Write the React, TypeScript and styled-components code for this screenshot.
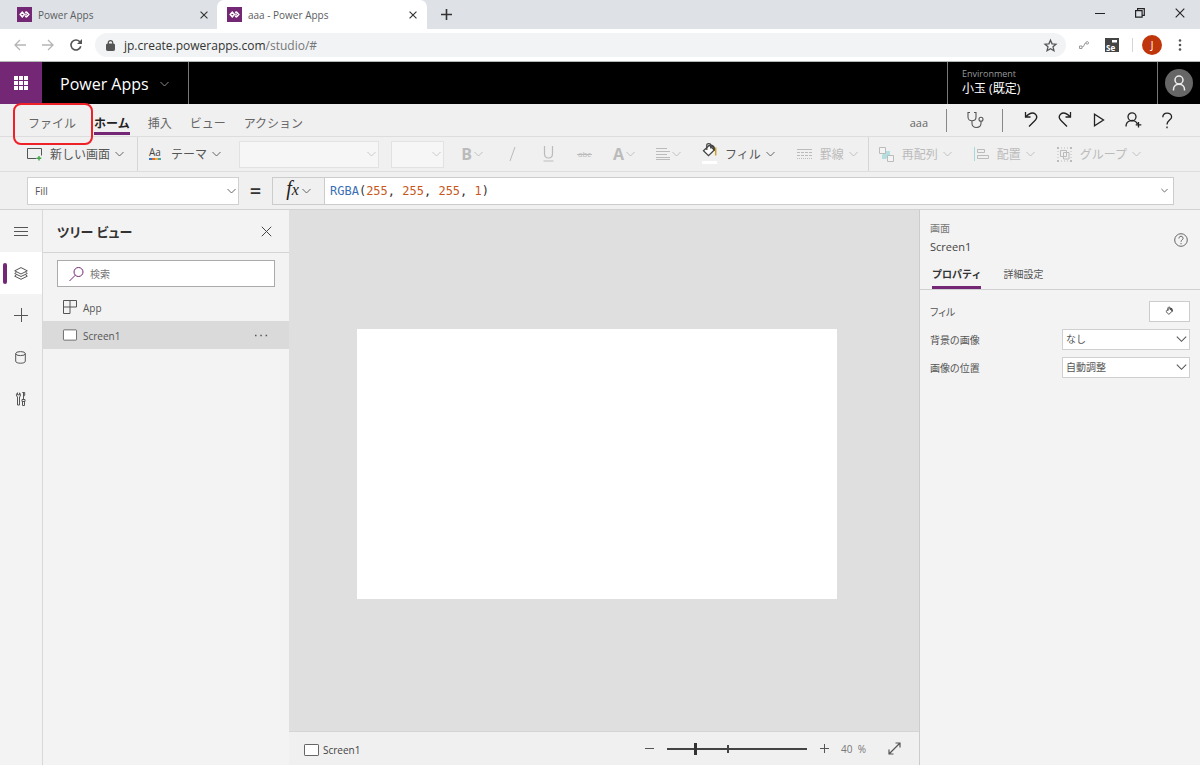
import React from "react";
import styled, { createGlobalStyle, css } from "styled-components";

const sans = `"Open Sans", "Noto Sans CJK JP", sans-serif`;
const purple = "#742774";

const GlobalStyle = createGlobalStyle`
  * { box-sizing: border-box; }
  body { margin: 0; font-family: ${sans}; font-size: 10px; color: #444; background: #f3f3f3; }
  button, input, select { font: inherit; color: inherit; margin: 0; }
  button { border: 0; padding: 0; background: none; cursor: pointer; white-space: nowrap; }
  svg { display: block; flex: none; overflow: visible; }
`;

/* ---------- icons ---------- */

const Svg = styled.svg<{ $w?: number }>`
  fill: none;
  stroke: currentColor;
  stroke-width: ${(p) => p.$w ?? 1};
`;

type IconProps = { w?: number; h?: number; box?: string; sw?: number; children: React.ReactNode };
const Icon = ({ w = 16, h = w, box = `0 0 ${w} ${h}`, sw, children }: IconProps) => (
  <Svg width={w} height={h} viewBox={box} $w={sw} aria-hidden="true">
    {children}
  </Svg>
);

const Chevron = ({ w = 9 }: { w?: number }) => (
  <Icon w={w} h={w === 9 ? 6 : 7} box="0 0 9 6" sw={0.9}>
    <path d="M.5 1 4.500 5 8.500 1" />
  </Icon>
);

const Cross = ({ size = 8, sw = 1.4 }: { size?: number; sw?: number }) => (
  <Icon w={size} box="0 0 10 10" sw={sw}>
    <path d="M.7.7 9.300 9.300M9.300.7.7 9.300" />
  </Icon>
);

const PowerLogo = () => (
  <Icon w={15} sw={1.5}>
    <rect width="15" height="15" fill={purple} stroke="none" />
    <path d="M5.300 5.200 7.400 7.500 5.300 9.800 3.200 7.500z" stroke="#fff" />
    <path d="M8 5.600 9.600 5.200 11.800 7.500 9.600 9.800 8 9.300M8.300 7.500h1.500" stroke="#fff" />
  </Icon>
);

const ScreenIcon = ({ w = 15 }: { w?: number }) => (
  <Icon w={w} h={12} box="0 0 15 12">
    <rect x=".5" y=".5" width="14" height="11" rx=".6" fill="#fff" stroke="#666" />
  </Icon>
);

const BucketShape = () => (
  <>
    <path d="M7.300 3.300 1.500 8.800 6.500 13.600 12.300 8z" fill="#fff" stroke="#444" />
    <path d="M4.800 8V2.800c0-1.500 3.800-1.900 4 .1v3.600" stroke="#444" />
    <path d="M8.800 3.600c2.500.3 3.600 1.900 3.400 5" stroke="#444" strokeWidth="2" />
  </>
);

/* ---------- browser frame ---------- */

const Page = styled.div`
  min-height: 100vh;
  display: flex;
  flex-direction: column;
`;

const TabStrip = styled.div`
  height: 29px;
  display: flex;
  background: #dee1e6;
`;

const BrowserTab = styled.div<{ $active?: boolean }>`
  width: ${(p) => (p.$active ? 210 : 217)}px;
  padding: 0 ${(p) => (p.$active ? 10 : 9)}px 0 ${(p) => (p.$active ? 10 : 17)}px;
  display: flex;
  align-items: center;
  gap: 6px;
  color: #5a5d61;
  font-size: 10px;
  background: ${(p) => (p.$active ? "#fff" : "transparent")};
  border-radius: 7px 7px 0 0;
  span { flex: 1; }
  button { color: #333; }
`;

const NewTab = styled.button`
  width: 39px;
  display: grid;
  place-items: center;
  color: #333;
`;

const WindowButtons = styled.div`
  margin-left: auto;
  display: flex;
`;

const WindowButton = styled.button`
  width: 40px;
  padding-bottom: 4px;
  display: grid;
  place-items: center;
  color: #222;
`;

const AddressRow = styled.div`
  height: 33px;
  display: flex;
  align-items: center;
  background: #fff;
  border-bottom: 1px solid #b4b8b5;
  padding: 0 8px 0 6px;
`;

const NavButton = styled.button<{ $dim?: boolean; $narrow?: boolean }>`
  width: ${(p) => (p.$narrow ? 24 : 28)}px;
  height: 24px;
  display: grid;
  place-items: center;
  color: ${(p) => (p.$dim ? "#b5b5b5" : "#555")};
`;

const Omnibox = styled.div`
  flex: 1;
  height: 24px;
  margin: 0 4px 0 5px;
  padding: 0 9px 0 11px;
  border-radius: 12px;
  background: #f1f3f4;
  display: flex;
  align-items: center;
  gap: 9px;
  color: #555;
`;

const Url = styled.div`
  flex: 1;
  font-size: 12px;
  color: #333;
  outline: 0;
  span { color: #777; }
`;

const Separator = styled.i`
  width: 1px;
  height: 14px;
  margin: 0 9px 0 6px;
  background: #d5d5d5;
`;

const Profile = styled.button`
  width: 20px;
  height: 20px;
  border-radius: 50%;
  background: #bf360c;
  color: #fff;
  font-size: 10px;
  margin-right: 6px;
`;

/* ---------- product header ---------- */

const Header = styled.header`
  height: 42px;
  display: flex;
  background: #000;
  color: #fff;
`;

const Waffle = styled.button`
  width: 42px;
  display: grid;
  place-items: center;
  background: ${purple};
`;

const Product = styled.button`
  width: 147px;
  padding: 2px 0 0 18px;
  display: flex;
  align-items: center;
  gap: 11px;
  border-right: 1px solid #777;
  font-size: 16px;
  svg { color: #999; }
`;

const Environment = styled.div`
  margin-left: auto;
  width: 211px;
  padding: 4px 14px;
  border: solid #777;
  border-width: 0 1px;
  font-size: 12px;
  line-height: 15px;
  small { display: block; font-size: 9px; color: #999; }
`;

const Account = styled.button`
  width: 42px;
  display: grid;
  place-items: center;
`;

/* ---------- ribbon ---------- */

const MenuRow = styled.div`
  height: 33px;
  display: flex;
  align-items: center;
  padding: 0 16px 0 28px;
  background: #f0f0f0;
  border-bottom: 1px solid #ddd;
`;

const Menu = styled.nav`
  flex: 1;
  display: flex;
  gap: 18px;
  padding-top: 6px;
`;

const MenuTab = styled.button<{ $active?: boolean }>`
  position: relative;
  height: 24px;
  padding-top: 2px;
  font-size: 12px;
  color: #666;
  border-bottom: 3px solid transparent;
  ${(p) => p.$active && css`color: #222; font-weight: 700; border-color: ${purple};`}
`;

const Highlight = styled.i`
  position: absolute;
  inset: -8px -17px -13px -15px;
  border: 2px solid #ee2028;
  border-radius: 8px;
  pointer-events: none;
`;

const AppName = styled.span`
  padding: 4px 8px 0 0;
  font-size: 11px;
  color: #666;
`;

const Rule = styled.i`
  width: 1px;
  height: 23px;
  margin: 0 11px 0 10px;
  background: #888;
`;

const ActionButton = styled.button`
  width: 34px;
  height: 28px;
  display: grid;
  place-items: center;
  color: #222;
`;

const Toolbar = styled.div`
  height: 35px;
  display: flex;
  align-items: stretch;
  background: #f0f0f0;
  border-bottom: 1px solid #ddd;
`;

const ToolGroup = styled.div<{ $inset?: boolean; $last?: boolean }>`
  display: flex;
  align-items: stretch;
  gap: 2px;
  padding: ${(p) => (p.$inset ? "0 3px 0 17px" : "0")};
  border-right: ${(p) => (p.$last ? 0 : 1)}px solid #d6d6d6;
`;

const ToolButton = styled.button`
  padding: 0 10px;
  display: flex;
  align-items: center;
  font-size: 12px;
  color: #555;
  span { margin: 0 5px 0 8px; }
  &:disabled { color: #bbb; }
`;

const Formats = styled.div`
  display: flex;
  margin-left: 4px;
`;

const FormatButton = styled.button<{ $menu?: boolean }>`
  width: ${(p) => (p.$menu ? 44 : 36)}px;
  display: flex;
  align-items: center;
  justify-content: center;
  gap: 2px;
  color: #bbb;
  font-size: 16px;
`;

const SelectBox = styled.span<{ $w: number; $h?: number; $inset?: number }>`
  position: relative;
  display: block;
  flex: none;
  width: ${(p) => p.$w}px;
  height: ${(p) => p.$h ?? 27}px;
  color: #555;
  select {
    appearance: none;
    width: 100%;
    height: 100%;
    padding: 0 20px 0 ${(p) => p.$inset ?? 7}px;
    border: 1px solid #d0d0d0;
    border-radius: 0;
    background: #fff;
    opacity: 1;
  }
  select:disabled { background: #f6f6f6; border-color: #e2e2e2; }
  select:disabled + svg { color: #c4c4c4; }
  svg {
    position: absolute;
    right: 3px;
    top: 50%;
    transform: translateY(-50%);
    pointer-events: none;
  }
`;

const FontSelects = styled.div`
  display: flex;
  align-items: center;
  gap: 12px;
  margin-left: 6px;
`;

const FormulaRow = styled.div`
  height: 38px;
  display: flex;
  align-items: center;
  padding: 0 26px 0 27px;
  background: #f0f0f0;
  border-bottom: 1px solid #d2d2d2;
`;

const Equals = styled.span`
  width: 33px;
  text-align: center;
  font-size: 20px;
  font-weight: 600;
  line-height: 24px;
  color: #333;
`;

const FxButton = styled.button`
  width: 53px;
  height: 28px;
  border: 1px solid #ccc;
  display: flex;
  align-items: center;
  justify-content: center;
  gap: 3px;
  font: italic 20px/24px "Liberation Serif", serif;
  color: #222;
  small { font-size: 16px; }
  span { padding-bottom: 3px; }
  svg { color: #555; }
`;

const Formula = styled.div`
  flex: 1;
  height: 28px;
  padding: 0 5px;
  border: 1px solid #ccc;
  border-left: 0;
  background: #fff;
  display: flex;
  align-items: center;
  justify-content: space-between;
  code { font: 12px "DejaVu Sans Mono", monospace; color: #333; outline: 0; }
  b { font-weight: 400; color: #3b6fb6; }
  i { font-style: normal; color: #c8571b; }
`;

/* ---------- work area ---------- */

const Work = styled.main`
  flex: 1;
  display: flex;
`;

const Rail = styled.nav`
  width: 43px;
  border-right: 1px solid #d8d8d8;
  background: #f3f3f3;
`;

const RailButton = styled.button<{ $active?: boolean }>`
  position: relative;
  width: 42px;
  height: 42px;
  display: grid;
  place-items: center;
  color: #555;
  ${(p) => p.$active && css`
    background: #fff;
    &::before {
      content: "";
      position: absolute;
      left: 3px;
      top: 11px;
      width: 4px;
      height: 21px;
      border-radius: 2px;
      background: ${purple};
    }
  `}
`;

const Tree = styled.aside`
  width: 246px;
  background: #f3f3f3;
`;

const TreeHeader = styled.div`
  height: 43px;
  padding: 0 17px 0 14px;
  display: flex;
  align-items: center;
  justify-content: space-between;
  border-bottom: 1px solid #d4d4d4;
  h2 { margin: 0; font-size: 13px; color: #333; font-feature-settings: "palt"; }
`;

const Search = styled.label`
  height: 27px;
  margin: 7px 14px 6px;
  padding-left: 11px;
  display: flex;
  align-items: center;
  gap: 6px;
  background: #fff;
  border: 1px solid #aaa;
  color: ${purple};
  input { flex: 1; min-width: 0; border: 0; outline: 0; padding: 0; background: none; font-size: 10px; color: #444; }
  input::placeholder { color: #777; opacity: 1; }
`;

const TreeRow = styled.div<{ $selected?: boolean }>`
  height: 28px;
  padding: 0 21px 0 20px;
  display: flex;
  align-items: center;
  gap: 6px;
  color: #555;
  background: ${(p) => (p.$selected ? "#dadada" : "transparent")};
  span { flex: 1; padding-top: 2px; }
`;

const Center = styled.section`
  flex: 1;
  min-width: 0;
  display: flex;
  flex-direction: column;
`;

const Canvas = styled.div`
  flex: 1;
  padding: 0 14px 14px 0;
  display: grid;
  place-items: center;
  background: #dfdfdf;
`;

const Artboard = styled.div`
  width: 480px;
  max-width: 100%;
  aspect-ratio: 16 / 9;
  background: #fff;
`;

const StatusBar = styled.div`
  height: 34px;
  padding: 0 18px 0 15px;
  display: flex;
  align-items: center;
  background: #f0f0f0;
  border-top: 1px solid #d4d4d4;
  color: #555;
`;

const Current = styled.div`
  flex: 1;
  display: flex;
  align-items: center;
  gap: 4px;
  padding-top: 2px;
  color: #444;
`;

const Percent = styled.span`
  margin: 0 22px 0 12px;
  color: #777;
  white-space: pre;
`;

const Zoom = styled.input`
  appearance: none;
  width: 140px;
  height: 12px;
  margin: 0 13px;
  background:
    linear-gradient(#444, #444) 60px center / 2px 8px no-repeat,
    linear-gradient(#444, #444) center / 100% 2px no-repeat;
  &::-webkit-slider-thumb {
    appearance: none;
    width: 3px;
    height: 12px;
    background: #333;
  }
`;

const Properties = styled.aside`
  width: 281px;
  border-left: 1px solid #ccc;
  background: #f3f3f3;
`;

const PropHeader = styled.div`
  height: 52px;
  padding: 8px 12px 0 10px;
  display: flex;
  align-items: center;
  justify-content: space-between;
  div { padding-bottom: 5px; }
  small { display: block; font-size: 10px; line-height: 18px; color: #777; }
  strong { display: block; font-size: 11px; line-height: 20px; font-weight: 400; }
  button { color: #666; }
`;

const PropTabs = styled.div`
  height: 28px;
  padding-left: 12px;
  display: flex;
  gap: 22px;
  border-bottom: 1px solid #d0d0d0;
`;

const PropTab = styled.button<{ $active?: boolean }>`
  padding-bottom: 1px;
  border-bottom: 3px solid transparent;
  font-size: 10px;
  color: #555;
  ${(p) => p.$active && css`color: #333; font-weight: 700; border-color: ${purple};`}
`;

const PropList = styled.div`
  padding: 7px 10px 0 10px;
`;

const PropRow = styled.div`
  height: 28px;
  display: flex;
  align-items: center;
  justify-content: space-between;
  label { color: #555; font-feature-settings: "palt"; }
`;

const ColorButton = styled.button`
  width: 41px;
  height: 21px;
  border: 1px solid #ccc;
  background: #fff;
  display: grid;
  place-items: center;
`;

const Tool = ({ icon, text, disabled }: { icon: React.ReactNode; text: string; disabled?: boolean }) => (
  <ToolButton disabled={disabled}>
    {icon}
    <span>{text}</span>
    <Chevron />
  </ToolButton>
);

export default function App() {
  return (
    <Page>
      <GlobalStyle />
      <TabStrip>
        <BrowserTab>
          <PowerLogo />
          <span>Power Apps</span>
          <button aria-label="Close tab"><Cross /></button>
        </BrowserTab>
        <BrowserTab $active>
          <PowerLogo />
          <span>aaa - Power Apps</span>
          <button aria-label="Close tab"><Cross /></button>
        </BrowserTab>
        <NewTab aria-label="New tab">
          <Icon w={11} sw={1.6}><path d="M5.500 0v11M0 5.500h11" /></Icon>
        </NewTab>
        <WindowButtons>
          <WindowButton aria-label="Minimize">
            <Icon w={10}><path d="M0 5.500h10" /></Icon>
          </WindowButton>
          <WindowButton aria-label="Restore">
            <Icon w={10} sw={1.2}><path d="M.6 2.600h6.500v6.500H.6zM2.600 2.600v-2h6.700v6.700H7" /></Icon>
          </WindowButton>
          <WindowButton aria-label="Close"><Cross size={10} sw={1.1} /></WindowButton>
        </WindowButtons>
      </TabStrip>

      <AddressRow>
        <NavButton $dim aria-label="Back">
          <Icon w={12} sw={1.3}><path d="M12 6H1M6 1 1 6l5 5" /></Icon>
        </NavButton>
        <NavButton $dim aria-label="Forward">
          <Icon w={12} sw={1.3}><path d="M0 6h11M6 1l5 5-5 5" /></Icon>
        </NavButton>
        <NavButton aria-label="Reload">
          <Icon w={12} sw={1.6}>
            <path d="M10.800 7.300A5 5 0 1 1 9.600 2.500L11 4" />
            <path d="M12 0v5H7z" fill="currentColor" stroke="none" />
          </Icon>
        </NavButton>
        <Omnibox>
          <Icon w={9} h={11}>
            <rect x=".5" y="4" width="8" height="6.500" rx=".8" fill="currentColor" />
            <path d="M2.300 4.500V2.800a2.200 2.200 0 0 1 4.400 0v1.700" strokeWidth="1.200" />
          </Icon>
          <Url role="textbox" aria-label="Address">jp.create.powerapps.com<span>/studio/#</span></Url>
          <Icon w={13} box="0 0 14 14" sw={1.4}>
            <path d="m7 1.300 1.700 3.900 4.200.4-3.200 2.800 1 4.200L7 10.400l-3.700 2.200 1-4.200L1.100 5.600l4.200-.4z" />
          </Icon>
        </Omnibox>
        <NavButton aria-label="Connector extension">
          <Icon w={10} h={8}>
            <path d="M.5 5h2.500v2.500H.5zM3 6c3 .5 1.500-4.500 4-4" stroke="#999" />
            <circle cx="8.200" cy="1.900" r="1.300" stroke="#999" />
          </Icon>
        </NavButton>
        <NavButton aria-label="Selenium">
          <Icon w={14}>
            <rect width="14" height="14" fill="#444" stroke="none" />
            <rect x="7" y="2" width="5" height="2.500" fill="#fff" stroke="none" />
            <text x="1" y="12.500" fontSize="8" fontWeight="700" fill="#fff" stroke="none">Se</text>
          </Icon>
        </NavButton>
        <Separator />
        <Profile>J</Profile>
        <NavButton $narrow aria-label="Browser menu">
          <Icon w={4} h={12}>
            <g fill="currentColor" stroke="none">
              <circle cx="2" cy="1.500" r="1.300" /><circle cx="2" cy="6" r="1.300" /><circle cx="2" cy="10.500" r="1.300" />
            </g>
          </Icon>
        </NavButton>
      </AddressRow>

      <Header>
        <Waffle aria-label="App launcher">
          <Icon w={14}>
            <g fill="#fff" stroke="none">
              {[0, 5, 10].map((y) => [0, 5, 10].map((x) => <rect key={`${x}-${y}`} x={x} y={y} width="4" height="4" />))}
            </g>
          </Icon>
        </Waffle>
        <Product>Power Apps <Chevron /></Product>
        <Environment><small>Environment</small>小玉 (既定)</Environment>
        <Account aria-label="Account">
          <Icon w={28} sw={1.5}>
            <circle cx="14" cy="14" r="14" fill="#666" stroke="none" />
            <circle cx="14" cy="11" r="4" stroke="#eee" />
            <path d="M8.500 21.500v-1c0-7 11-7 11 0v1" stroke="#eee" />
          </Icon>
        </Account>
      </Header>

      <MenuRow>
        <Menu>
          <MenuTab>ファイル<Highlight /></MenuTab>
          <MenuTab $active>ホーム</MenuTab>
          <MenuTab>挿入</MenuTab>
          <MenuTab>ビュー</MenuTab>
          <MenuTab>アクション</MenuTab>
        </Menu>
        <AppName>aaa</AppName>
        <Rule />
        <ActionButton aria-label="App checker">
          <Icon w={18} sw={1.1}>
            <path d="M4 1.500H2v4.500c0 5 8 5 8 0V1.500H8M6 9.800v3c0 5 9 5 9-.5v-2" stroke="#555" />
            <circle cx="15" cy="8.300" r="2" stroke="#555" />
          </Icon>
        </ActionButton>
        <Rule />
        <ActionButton aria-label="Undo">
          <Icon w={16} sw={1.3}><path d="M2.500 0v5h5M2.700 4.800C6 1.500 10 0 12.500 2.300c2 2 1.200 4.500-.5 6.200L6 14.500" /></Icon>
        </ActionButton>
        <ActionButton aria-label="Redo">
          <Icon w={16} sw={1.3}><path d="M13.500 0v5h-5M13.300 4.800C10 1.500 6 0 3.500 2.300c-2 2-1.200 4.500.5 6.200l6 6" /></Icon>
        </ActionButton>
        <ActionButton aria-label="Preview">
          <Icon w={12} h={14} sw={1.3}><path d="M1.500 1.300v11.400L10.500 7z" /></Icon>
        </ActionButton>
        <ActionButton aria-label="Share">
          <Icon w={17} h={16} sw={1.3}>
            <circle cx="7" cy="4.800" r="4" />
            <path d="M1 14.500c0-7.500 10-7.500 11.300-2.500M13.500 10v5.600M10.700 12.800h5.600" />
          </Icon>
        </ActionButton>
        <ActionButton aria-label="Help">
          <Icon w={12} h={17} sw={1.3}>
            <path d="M1.800 5.200c0-5.500 8.800-5.500 8.800-.3C10.600 8 6 8.300 6 12.500M6 14.500v1.700" />
          </Icon>
        </ActionButton>
      </MenuRow>

      <Toolbar>
        <ToolGroup $inset>
          <Tool
            text="新しい画面"
            icon={
              <Icon w={15} h={14}>
                <path d="M9.500 11.500H.5v-10h14v7" stroke="#555" />
                <path d="M12 9v4.600M9.700 11.300h4.600" stroke="#3fa648" strokeWidth="1.400" />
              </Icon>
            }
          />
        </ToolGroup>
        <ToolGroup>
          <Tool
            text="テーマ"
            icon={
              <Icon w={15} h={14}>
                <text x="1" y="9" fontSize="10" fill="#444" stroke="none">Aa</text>
                <g strokeWidth="2"><path d="M1 12h3" stroke="#3476c8" /><path d="M4 12h3" stroke="#e06c2c" /><path d="M7 12h3" stroke="#e8b04c" /><path d="M10 12h3" stroke="#4aa5a0" /></g>
              </Icon>
            }
          />
          <FontSelects>
            <SelectBox $w={140}><select disabled aria-label="Font" /><Chevron /></SelectBox>
            <SelectBox $w={53}><select disabled aria-label="Font size" /><Chevron /></SelectBox>
          </FontSelects>
          <Formats>
            <FormatButton $menu disabled aria-label="Bold"><b>B</b><Chevron /></FormatButton>
            <FormatButton disabled aria-label="Italic"><Icon w={7} h={14}><path d="M6 0 1 14" /></Icon></FormatButton>
            <FormatButton disabled aria-label="Underline">
              <Icon w={11} h={16} sw={1.2}><path d="M1.500 0v7.500c0 6 8 6 8 0V0M.5 15h10" /></Icon>
            </FormatButton>
            <FormatButton disabled aria-label="Strikethrough">
              <Icon w={15} h={10}>
                <text x="1" y="8" fontSize="8" fill="currentColor" stroke="none">abc</text><path d="M0 5.500h15" />
              </Icon>
            </FormatButton>
            <FormatButton $menu disabled aria-label="Font color"><b>A</b><Chevron /></FormatButton>
            <FormatButton $menu disabled aria-label="Alignment">
              <Icon w={14} h={12}><path d="M0 .5h11M0 3.500h14M0 6.500h11M0 9.500h14M0 11.500h14" /></Icon><Chevron />
            </FormatButton>
          </Formats>
          <Tool
            text="フィル"
            icon={
              <Icon w={15} h={24} sw={1.3}>
                <BucketShape />
                <path d="M13.700 5.500v8" stroke="#c9a227" strokeWidth="1.500" />
                <rect y="19" width="15" height="3" fill="#fff" stroke="none" />
              </Icon>
            }
          />
          <Tool
            text="罫線"
            disabled
            icon={
              <Icon w={15} h={12}>
                <path d="M0 1.500h15" /><path d="M0 4.500h15M0 7.500h15" strokeDasharray="3 1" /><path d="M0 10.500h15" strokeDasharray="1 1" />
              </Icon>
            }
          />
        </ToolGroup>
        <ToolGroup $last>
          <Tool
            text="再配列"
            disabled
            icon={
              <Icon w={15} h={15}>
                <path d="M4 4h7v7H4z" fill="#b4dfe0" stroke="none" />
                <path d="M.5.5h6v6h-6zM8.500 8.500h6v6h-6z" fill="#f4f4f4" /><path d="M3 7.500h4.500V12H3z" fill="#b4dfe0" stroke="none" />
              </Icon>
            }
          />
          <Tool
            text="配置"
            disabled
            icon={
              <Icon w={15} h={14}>
                <path d="M.5 0v14" stroke="#a8dadd" /><path d="M3.500 2.500h7v3h-7zM3.500 8.500h11v3h-11z" />
              </Icon>
            }
          />
          <Tool
            text="グループ"
            disabled
            icon={
              <Icon w={15} h={15}>
                <path d="M3.500 3.500h6v6h-6zM6.500 5.500h5.500V12H6.500z" /><path d="M1 4v8M14 4v8M4 1h8M4 14h8" strokeDasharray="1 2" />
                <path d="M0 1h2M13 1h2M0 14h2M13 14h2" strokeWidth="2" />
              </Icon>
            }
          />
        </ToolGroup>
      </Toolbar>

      <FormulaRow>
        <SelectBox $w={212} $h={28}>
          <select aria-label="Property"><option>Fill</option></select><Chevron />
        </SelectBox>
        <Equals>=</Equals>
        <FxButton aria-label="Functions"><span>f<small>x</small></span><Chevron /></FxButton>
        <Formula>
          <code role="textbox" aria-label="Formula">
            <b>RGBA</b>(<i>255</i>, <i>255</i>, <i>255</i>, <i>1</i>)
          </code>
          <Icon w={7} h={5} box="0 0 9 6"><path d="M.5 1 4.500 5 8.500 1" /></Icon>
        </Formula>
      </FormulaRow>

      <Work>
        <Rail>
          <RailButton aria-label="Menu"><Icon w={14} h={9}><path d="M0 .5h14M0 4.500h14M0 8.500h14" /></Icon></RailButton>
          <RailButton $active aria-label="Tree view">
            <Icon w={14} h={13}>
              <path d="M7 .6 13.300 3.800 7 7 .7 3.800zM2.500 5.200.7 6.500 7 9.500l6.300-3-1.800-1.300M2.500 7.800.7 9.200 7 12.300l6.300-3.100-1.800-1.400" />
            </Icon>
          </RailButton>
          <RailButton aria-label="Insert"><Icon w={14}><path d="M7.500 0v14M0 7.500h14" /></Icon></RailButton>
          <RailButton aria-label="Data">
            <Icon w={12} h={13}>
              <ellipse cx="5.500" cy="2.600" rx="4.800" ry="2" /><path d="M.7 2.600v7.600c0 2.700 9.600 2.700 9.600 0V2.600" />
            </Icon>
          </RailButton>
          <RailButton aria-label="Advanced tools">
            <Icon w={10} h={14}>
              <path d="M1.500 5v8h2V5C5 4 4.500 1.500 3.500.8v2h-2v-2C0 1.500 0 4 1.500 5zM7.500.5v7M6.300.5h2.400v3l-1.200 1M6 7.500h3v2H6zM6.500 9.500v4h2v-4" />
            </Icon>
          </RailButton>
        </Rail>

        <Tree>
          <TreeHeader>
            <h2>ツリー ビュー</h2>
            <button aria-label="Close"><Cross size={11} sw={0.9} /></button>
          </TreeHeader>
          <Search>
            <Icon w={15} h={14}><circle cx="9.500" cy="5" r="4.500" /><path d="M6.300 8.200.5 14" /></Icon>
            <input placeholder="検索" aria-label="検索" />
          </Search>
          <TreeRow>
            <Icon w={14}><path d="M.5.5h13v6.500H.5zM.5 7v6.500H7V.5" /></Icon>
            <span>App</span>
          </TreeRow>
          <TreeRow $selected>
            <ScreenIcon w={14} />
            <span>Screen1</span>
            <button aria-label="More">
              <Icon w={14} h={3}><path d="M1 1.500h1.500M6.300 1.500h1.500M11.600 1.500h1.500" strokeWidth="1.500" /></Icon>
            </button>
          </TreeRow>
        </Tree>

        <Center>
          <Canvas><Artboard /></Canvas>
          <StatusBar>
            <Current><ScreenIcon /> Screen1</Current>
            <button aria-label="Zoom out"><Icon w={9}><path d="M0 4.500h9" /></Icon></button>
            <Zoom type="range" min="0" max="200" defaultValue="40" aria-label="Zoom" />
            <button aria-label="Zoom in"><Icon w={9}><path d="M4.500 0v9M0 4.500h9" /></Icon></button>
            <Percent>40  %</Percent>
            <button aria-label="Fit to window">
              <Icon w={13} sw={1.2}><path d="M1 12 12 1M7.500 1H12v4.500M1 7.500V12h4.500" /></Icon>
            </button>
          </StatusBar>
        </Center>

        <Properties>
          <PropHeader>
            <div><small>画面</small><strong>Screen1</strong></div>
            <button aria-label="Help">
              <Icon w={14}>
                <circle cx="7" cy="7" r="6.300" /><path d="M4.900 5.500c0-3 4.200-3 4.200-.2C9.100 7 7 6.700 7 8.800M7 10v1.200" />
              </Icon>
            </button>
          </PropHeader>
          <PropTabs>
            <PropTab $active>プロパティ</PropTab>
            <PropTab>詳細設定</PropTab>
          </PropTabs>
          <PropList>
            <PropRow>
              <label htmlFor="fill">フィル</label>
              <ColorButton id="fill">
                <Icon w={9} h={10} box="0 0 15 16" sw={1.5}><BucketShape /></Icon>
              </ColorButton>
            </PropRow>
            <PropRow>
              <label htmlFor="bg">背景の画像</label>
              <SelectBox $w={128} $h={21} $inset={3}><select id="bg"><option>なし</option></select><Chevron w={11} /></SelectBox>
            </PropRow>
            <PropRow>
              <label htmlFor="pos">画像の位置</label>
              <SelectBox $w={128} $h={21} $inset={3}><select id="pos"><option>自動調整</option></select><Chevron w={11} /></SelectBox>
            </PropRow>
          </PropList>
        </Properties>
      </Work>
    </Page>
  );
}
